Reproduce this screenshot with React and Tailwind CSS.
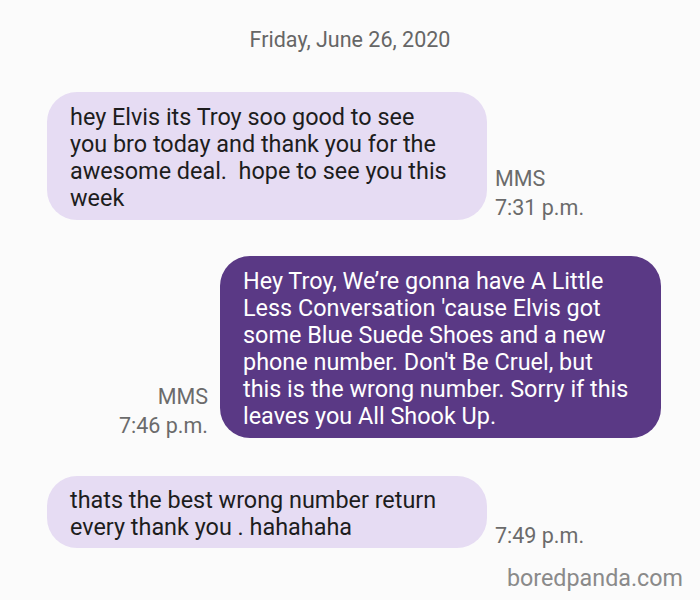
import React from 'react';

const Meta = ({ lines, align = 'left' }) => (
  <div
    className={`flex flex-col text-[21.5px] leading-[29px] text-[#6b6b6b] mb-[-2px] whitespace-nowrap ${
      align === 'right' ? 'items-end text-right' : 'items-start'
    }`}
  >
    {lines.map((l) => (
      <span key={l}>{l}</span>
    ))}
  </div>
);

const Lines = ({ lines }) =>
  lines.map((l, i) => (
    <div key={i} className="whitespace-pre">
      {l}
    </div>
  ));

export default function App() {
  return (
    <div
      className="w-[700px] h-[600px] bg-[#fbfbfb] overflow-hidden flex flex-col"
      style={{ fontFamily: 'Roboto, "Noto Sans", sans-serif' }}
    >
      {/* Date header */}
      <div className="pt-[27px] text-center text-[21.5px] leading-[26px] text-[#666]">
        Friday, June 26, 2020
      </div>

      {/* Incoming 1 */}
      <div className="mt-[39px] flex items-end gap-[8px] pl-[47px]">
        <div className="w-[440px] shrink-0 rounded-[30px] bg-[#e6dcf3] pl-[23px] pr-[10px] pt-[12px] pb-[8px] text-[23.4px] leading-[27px] text-[#1d1d1d]">
          <Lines
            lines={[
              'hey Elvis its Troy soo good to see',
              'you bro today and thank you for the',
              'awesome deal.  hope to see you this',
              'week',
            ]}
          />
        </div>
        <Meta lines={['MMS', '7:31 p.m.']} />
      </div>

      {/* Outgoing */}
      <div className="mt-[36px] flex items-end justify-end gap-[12px] pr-[39px]">
        <Meta lines={['MMS', '7:46 p.m.']} align="right" />
        <div className="w-[441px] shrink-0 rounded-[30px] bg-[#5a3985] pl-[23px] pr-[10px] pt-[12px] pb-[8px] text-[23.4px] leading-[27px] text-white">
          <Lines
            lines={[
              'Hey Troy, We’re gonna have A Little',
              "Less Conversation 'cause Elvis got",
              'some Blue Suede Shoes and a new',
              "phone number. Don't Be Cruel, but",
              'this is the wrong number. Sorry if this',
              'leaves you All Shook Up.',
            ]}
          />
        </div>
      </div>

      {/* Incoming 2 */}
      <div className="mt-[38px] flex items-end gap-[8px] pl-[47px]">
        <div className="w-[440px] shrink-0 rounded-[30px] bg-[#e6dcf3] pl-[23px] pr-[10px] pt-[11px] pb-[7px] text-[23.4px] leading-[27px] text-[#1d1d1d]">
          <Lines
            lines={['thats the best wrong number return', 'every thank you . hahahaha']}
          />
        </div>
        <Meta lines={['7:49 p.m.']} />
      </div>

      {/* Watermark */}
      <div className="mt-[15px] pr-[17px] text-right text-[23.3px] leading-[30px] text-[#8a8a8a]">
        boredpanda.com
      </div>
    </div>
  );
}
